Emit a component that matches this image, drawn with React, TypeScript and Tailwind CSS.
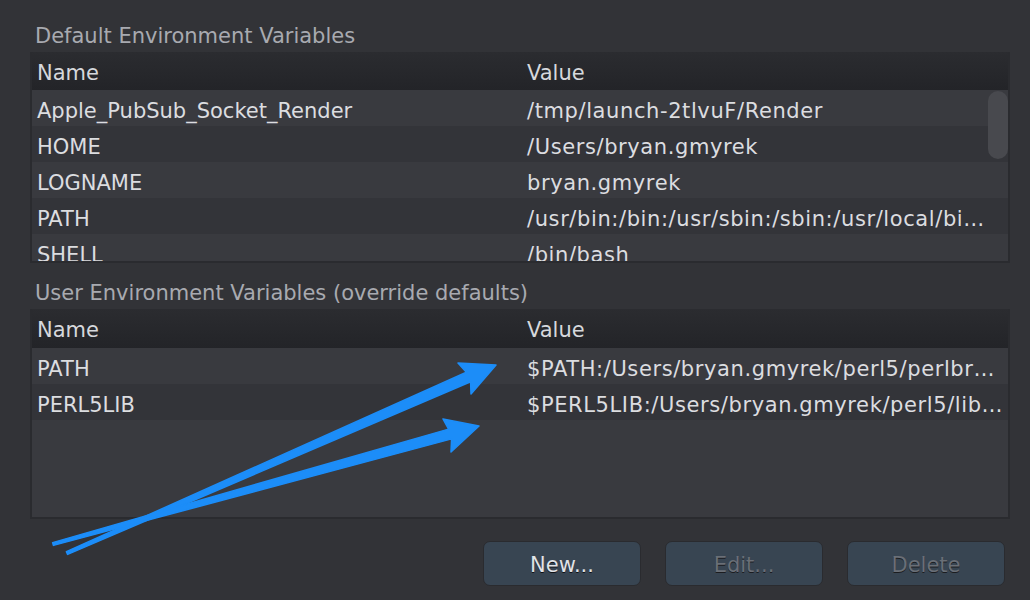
import React from 'react';

type Row = { name: string; value: string };

const defaultVars: Row[] = [
  { name: 'Apple_PubSub_Socket_Render', value: '/tmp/launch-2tlvuF/Render' },
  { name: 'HOME', value: '/Users/bryan.gmyrek' },
  { name: 'LOGNAME', value: 'bryan.gmyrek' },
  { name: 'PATH', value: '/usr/bin:/bin:/usr/sbin:/sbin:/usr/local/bi…' },
  { name: 'SHELL', value: '/bin/bash' },
];

const userVars: Row[] = [
  { name: 'PATH', value: '$PATH:/Users/bryan.gmyrek/perl5/perlbr…' },
  { name: 'PERL5LIB', value: '$PERL5LIB:/Users/bryan.gmyrek/perl5/lib…' },
];

const font = { fontFamily: '"DejaVu Sans", "Liberation Sans", sans-serif' };

function SectionLabel({ children, className }: { children: React.ReactNode; className: string }) {
  return (
    <div className={`h-[26px] pl-[5px] text-[21px] leading-[26px] text-[#a8aab0] ${className}`}>{children}</div>
  );
}

function TableHeader({ height }: { height: string }) {
  return (
    <div
      className={`flex shrink-0 bg-gradient-to-b from-[#2b2c30] to-[#232428] pt-[5px] text-[21px] leading-[32px] text-[#d6d8dc] ${height}`}
    >
      <div className="w-[494px] pl-[5px]">Name</div>
      <div className="pl-[1px]">Value</div>
    </div>
  );
}

function TableRow({ row, index }: { row: Row; index: number }) {
  return (
    <div
      className={`flex h-[36px] shrink-0 pt-[5px] text-[21px] leading-[32px] text-[#dcdde0] ${
        index % 2 === 0 ? 'bg-[#393a3f]' : 'bg-[#333439]'
      }`}
    >
      <div className="w-[494px] truncate pl-[5px]">{row.name}</div>
      <div className="min-w-0 flex-1 truncate whitespace-nowrap pl-[1px] pr-[4px] tracking-[0.6px]">{row.value}</div>
    </div>
  );
}

function Button({ label, disabled }: { label: string; disabled?: boolean }) {
  return (
    <div
      className={`flex h-[45px] w-[158px] items-center justify-center rounded-[7px] border border-[#2a2b2f] bg-[#384552] pt-[4px] text-[21px] ${
        disabled ? 'text-[#6a6f77] [text-shadow:0_1px_0_#1b1c1f]' : 'text-[#e1e4e8] [text-shadow:0_1px_0_#101114]'
      }`}
    >
      {label}
    </div>
  );
}

export default function App() {
  return (
    <div className="relative h-[600px] w-[1030px] overflow-hidden bg-[#323337] pl-[30px] pr-[20px]" style={font}>
      <SectionLabel className="mt-[23px] mb-[3px]">Default Environment Variables</SectionLabel>

      <div className="flex h-[211px] flex-col overflow-hidden border-x-2 border-b-2 border-[#2a2b2f]">
        <TableHeader height="h-[38px]" />
        <div className="relative flex flex-1 flex-col overflow-hidden">
          {defaultVars.map((row, i) => (
            <TableRow key={row.name} row={row} index={i} />
          ))}
          {/* scrollbar thumb */}
          <div className="absolute top-[1px] right-[0px] h-[68px] w-[20px] rounded-full bg-[#48494e]" />
        </div>
      </div>

      <SectionLabel className="mt-[17px] mb-[3px]">User Environment Variables (override defaults)</SectionLabel>

      <div className="flex h-[210px] flex-col overflow-hidden border-x-2 border-b-2 border-[#2a2b2f] bg-[#393a3f]">
        <TableHeader height="h-[39px]" />
        {userVars.map((row, i) => (
          <TableRow key={row.name} row={row} index={i} />
        ))}
      </div>

      <div className="mt-[22px] mr-[5px] flex justify-end gap-[24px]">
        <Button label="New..." />
        <Button label="Edit..." disabled />
        <Button label="Delete" disabled />
      </div>

      {/* annotation arrows */}
      <svg className="pointer-events-none absolute inset-0" width="1030" height="600" viewBox="0 0 1030 600">
        <g fill="#1c8df8" stroke="#1c8df8" strokeWidth="1.5" strokeLinejoin="round">
          <polygon points="66.4,551.6 466.4,372.3 458,363 496,365 471,394 470.6,381.7 67.6,554.4" />
          <polygon points="52.6,542.6 448.6,429.1 443,419 479,426 451,452 451.6,438.9 53.4,545.4" />
        </g>
      </svg>
    </div>
  );
}
